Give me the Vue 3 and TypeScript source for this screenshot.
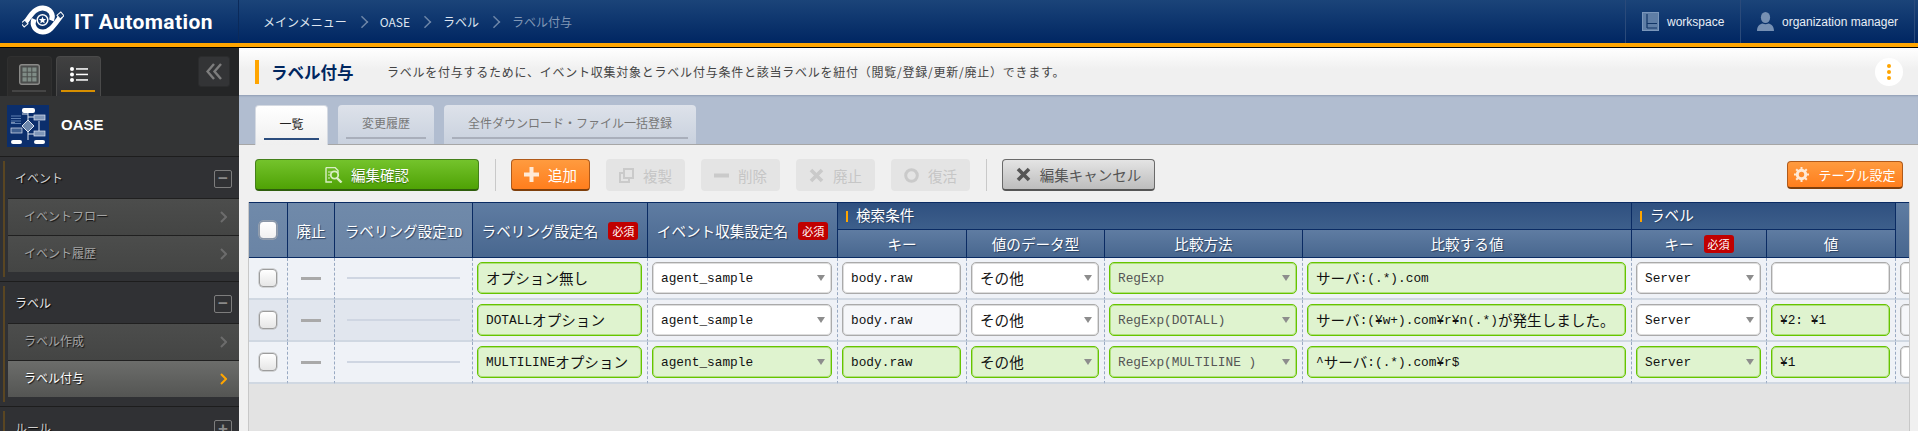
<template>
  <div class="page">
    <header class="top">
      <div class="brand">
        <svg class="logo" viewBox="0 0 42 30" fill="none" stroke="#fff">
          <path d="M3 18C9 10 13 2.500 21 3C28 3.500 32 9 29.500 15.500" stroke-width="5" />
          <path d="M39 11C33 19 28 27.500 20.500 27C13 26.500 9.500 20.500 12 14" stroke-width="5" />
          <circle cx="20.500" cy="15" r="5.300" stroke-width="1.500" />
          <path d="M20.500 11.500l1 2.500 2.700.1-2.100 1.700.7 2.600-2.300-1.500-2.300 1.500.7-2.600-2.100-1.700 2.700-.1z" fill="#fff" stroke="none" />
          <rect x="0" y="16" width="5" height="5" fill="#1c3f70" stroke-width="1" transform="rotate(-40 2.500 18.500)" />
          <rect x="36" y="8" width="5" height="5" fill="#1c3f70" stroke-width="1" transform="rotate(-40 38.500 10.500)" />
        </svg>
        <span class="brand-name">IT Automation</span>
      </div>
      <nav class="crumbs">
        <template v-for="(c, i) in crumbs" :key="c">
          <span v-if="i > 0" class="crumb-arrow"></span>
          <span :class="{ 'crumb-last': i === crumbs.length - 1 }">{{ c }}</span>
        </template>
      </nav>
      <div class="top-right">
        <div class="top-item workspace">
          <svg width="17" height="19" viewBox="0 0 17 19">
            <rect x=".5" y=".5" width="16" height="18" fill="#5f7ea6" stroke="#7b97bb" />
            <path d="M5 2v14M5 11.500h10M5 16h10" stroke="#123566" stroke-width="1.200" fill="none" />
          </svg>
          <span>workspace</span>
        </div>
        <div class="top-item user">
          <svg width="17" height="19" viewBox="0 0 17 19" fill="#7690b3">
            <ellipse cx="8.500" cy="5.500" rx="4.600" ry="5.500" />
            <path d="M0 19c0-5 3-7 5.500-7.500 2 1 4 1 6 0C14 12 17 14 17 19z" />
          </svg>
          <span>organization manager</span>
        </div>
      </div>
    </header>

    <div class="body">
      <aside class="side">
        <div class="side-tabs">
          <div class="side-tab">
            <svg width="21" height="21" viewBox="0 0 21 21">
              <rect x=".7" y=".7" width="19.600" height="19.600" rx="2" fill="#4b4d4c" stroke="#8a8a88" stroke-width="1.400" />
              <path d="M3.500 3.500h14v14h-14z" fill="#7f8c86" />
              <path d="M8.200 3v15M12.800 3v15M3 8.200h15M3 12.800h15" stroke="#4b4d4c" />
            </svg>
          </div>
          <div class="side-tab side-tab-on">
            <svg width="18" height="15" viewBox="0 0 18 15" fill="#fff">
              <circle cx="2" cy="2" r="2" />
              <circle cx="2" cy="7.500" r="2" />
              <circle cx="2" cy="13" r="2" />
              <rect x="6" y="1.200" width="12" height="1.500" />
              <rect x="6" y="6.700" width="12" height="1.500" />
              <rect x="6" y="12.200" width="12" height="1.500" />
            </svg>
          </div>
          <button class="collapse">
            <svg width="16" height="17" viewBox="0 0 16 17" fill="none" stroke="#7d7d7d" stroke-width="2.400">
              <path d="M8 1L1.500 8.500 8 16M15 1L8.500 8.500 15 16" />
            </svg>
          </button>
        </div>
        <div class="menu-title">
          <svg class="menu-icon" viewBox="0 0 42 42">
            <rect width="42" height="42" fill="#0b2e6c" />
            <path d="M21 5v30M21 9h-6M21 12h6M21 29h8M4 18h4M32 16v10" stroke="#dfe6f0" fill="none" />
            <rect x="15" y="3" width="13" height="5" rx="2" fill="#fff" />
            <path d="M4 11h10M4 13.500h10M4 16h10M4 18.500h10" stroke="#5f7fb0" />
            <rect x="27" y="10" width="11" height="5" fill="#7f96b8" stroke="#dfe6f0" stroke-width=".7" />
            <path d="M21 15l6 6-6 6-6-6z" fill="#6c86ab" stroke="#dfe6f0" />
            <rect x="4" y="23" width="11" height="5" fill="#3f5f90" stroke="#dfe6f0" stroke-width=".7" />
            <rect x="27" y="26" width="11" height="5" fill="#7f96b8" stroke="#dfe6f0" stroke-width=".7" />
            <rect x="4" y="35" width="11" height="4" rx="2" fill="#fff" />
            <rect x="27" y="35" width="11" height="4" rx="2" fill="#fff" />
          </svg>
          <span class="menu-name">OASE</span>
        </div>
        <section v-for="g in groups" :key="g.title" class="group">
          <div class="group-in">
            <div class="group-head">
              <span class="group-label" :class="{ 'head-on': g.title === 'ラベル' }">{{ g.title }}</span>
              <span class="toggle">{{ g.items.length ? '−' : '+' }}</span>
            </div>
            <div v-for="it in g.items" :key="it" class="item" :class="{ 'item-on': it === 'ラベル付与' }">
              <span class="item-label">{{ it }}</span>
              <svg width="7" height="12" viewBox="0 0 7 12" fill="none" stroke-width="2" class="item-arrow">
                <path d="M1 1l5 5-5 5" />
              </svg>
            </div>
          </div>
        </section>
      </aside>

      <main class="main">
        <div class="title-bar">
          <h1>ラベル付与</h1>
          <p>ラベルを付与するために、イベント収集対象とラベル付与条件と該当ラベルを紐付（閲覧/登録/更新/廃止）できます。</p>
          <div class="dots"><i></i><i></i><i></i></div>
        </div>

        <div class="tabs">
          <div class="tab tab-on">一覧</div>
          <div class="tab tab-history">変更履歴</div>
          <div class="tab tab-bulk">全件ダウンロード・ファイル一括登録</div>
        </div>

        <div class="toolbar">
          <button class="btn btn-green">
            <svg width="18" height="16" viewBox="0 0 18 16" fill="none" stroke="#d9efc5">
              <path d="M1 .5h9l3 3V6M1 .5v14.500h6" stroke-width="1.400" />
              <circle cx="9.500" cy="8" r="3.700" stroke-width="1.800" />
              <path d="M12 11l4.500 4.500" stroke-width="2.400" />
              <path d="M3 5h4M3 8h2M3 11h2" />
            </svg>
            <span>編集確認</span>
          </button>
          <span class="sep"></span>
          <button class="btn btn-orange">
            <svg width="15" height="15" viewBox="0 0 15 15" fill="#ffe9d6"><path d="M5.500 0h4v5.500H15v4H9.500V15h-4V9.500H0v-4h5.500z" /></svg>
            <span>追加</span>
          </button>
          <button class="btn btn-off">
            <svg width="15" height="15" viewBox="0 0 15 15" fill="none" stroke="#cacaca" stroke-width="2"><path d="M5 1h9v9H5zM5 5H1v9h9v-4" /></svg>
            <span>複製</span>
          </button>
          <button class="btn btn-off">
            <svg width="15" height="15" viewBox="0 0 15 15" fill="#cacaca"><rect y="5.500" width="15" height="4" /></svg>
            <span>削除</span>
          </button>
          <button class="btn btn-off">
            <svg width="15" height="15" viewBox="0 0 15 15" fill="none" stroke="#cacaca" stroke-width="3.600"><path d="M2 2l11 11M13 2L2 13" /></svg>
            <span>廃止</span>
          </button>
          <button class="btn btn-off">
            <svg width="15" height="15" viewBox="0 0 15 15" fill="none" stroke="#cacaca" stroke-width="3"><circle cx="7.500" cy="7.500" r="5.800" /></svg>
            <span>復活</span>
          </button>
          <span class="sep"></span>
          <button class="btn btn-gray">
            <svg width="15" height="15" viewBox="0 0 15 15" fill="none" stroke="#555" stroke-width="3.600"><path d="M2 2l11 11M13 2L2 13" /></svg>
            <span>編集キャンセル</span>
          </button>
          <button class="btn btn-orange btn-setting">
            <svg width="15" height="15" viewBox="0 0 15 15">
              <circle cx="7.500" cy="7.500" r="4.200" fill="none" stroke="#ffe9d6" stroke-width="3" />
              <path d="M7.500 0v15M0 7.500h15M2.200 2.200l10.600 10.600M12.800 2.200L2.200 12.800" stroke="#ffe9d6" stroke-width="2" stroke-dasharray="2.500 10" />
            </svg>
            <span>テーブル設定</span>
          </button>
        </div>

        <div class="table-area">
          <div class="table-wrap">
            <table>
              <colgroup>
                <col v-for="w in colWidths" :key="w.id" :class="w.id" />
              </colgroup>
              <thead>
                <tr>
                  <th rowspan="2" class="th-light"><span class="check check-head"></span></th>
                  <th rowspan="2" class="th-light">廃止</th>
                  <th rowspan="2" class="th-light">ラベリング設定<span class="lat">ID</span></th>
                  <th rowspan="2">ラベリング設定名<em>必須</em></th>
                  <th rowspan="2">イベント収集設定名<em>必須</em></th>
                  <th colspan="4" class="th-group"><span class="mark"></span>検索条件</th>
                  <th colspan="2" class="th-group"><span class="mark"></span>ラベル</th>
                  <th rowspan="2"></th>
                </tr>
                <tr>
                  <th>キー</th>
                  <th>値のデータ型</th>
                  <th>比較方法</th>
                  <th>比較する値</th>
                  <th>キー<em>必須</em></th>
                  <th>値</th>
                </tr>
              </thead>
              <tbody>
                <tr v-for="(row, r) in rows" :key="r">
                  <td class="td-fix"><span class="check"></span></td>
                  <td class="td-fix"><span class="dash"></span></td>
                  <td class="td-fix"><span class="idline"></span></td>
                  <td v-for="(f, c) in row" :key="c">
                    <div class="field" :class="{ on: f.on, select: f.sel, soft: f.soft, dim: f.dim }">
                      <span v-for="(s, n) in segs(f.v)" :key="n" :class="s.cjk ? 'cjk' : 'lat'">{{ s.t }}</span>
                    </div>
                  </td>
                </tr>
              </tbody>
            </table>
          </div>
        </div>
      </main>
    </div>
  </div>
</template>

<script setup lang="ts">
interface Cell {
  v: string
  on?: boolean
  sel?: boolean
  soft?: boolean
  dim?: boolean
}

const crumbs = ['メインメニュー', 'OASE', 'ラベル', 'ラベル付与']

const groups = [
  { title: 'イベント', items: ['イベントフロー', 'イベント履歴'] },
  { title: 'ラベル', items: ['ラベル作成', 'ラベル付与'] },
  { title: 'ルール', items: [] as string[] },
]

const colWidths = ['c-check', 'c-off', 'c-id', 'c-name', 'c-event', 'c-key', 'c-type', 'c-cmp', 'c-val', 'c-lkey', 'c-lval', 'c-next'].map((id) => ({ id }))

const rows: Cell[][] = [
  [
    { v: 'オプション無し', on: true },
    { v: 'agent_sample', sel: true },
    { v: 'body.raw' },
    { v: 'その他', sel: true },
    { v: 'RegExp', on: true, sel: true, dim: true },
    { v: 'サーバ:(.*).com', on: true },
    { v: 'Server', sel: true },
    { v: '' },
    { v: '' },
  ],
  [
    { v: 'DOTALLオプション', on: true },
    { v: 'agent_sample', sel: true },
    { v: 'body.raw', soft: true },
    { v: 'その他', sel: true },
    { v: 'RegExp(DOTALL)', on: true, sel: true, dim: true },
    { v: 'サーバ:(¥w+).com¥r¥n(.*)が発生しました。', on: true },
    { v: 'Server', sel: true },
    { v: '¥2: ¥1', on: true },
    { v: '', soft: true },
  ],
  [
    { v: 'MULTILINEオプション', on: true },
    { v: 'agent_sample', on: true, sel: true },
    { v: 'body.raw', on: true },
    { v: 'その他', on: true, sel: true },
    { v: 'RegExp(MULTILINE )', on: true, sel: true, dim: true },
    { v: '^サーバ:(.*).com¥r$', on: true },
    { v: 'Server', on: true, sel: true },
    { v: '¥1', on: true },
    { v: '' },
  ],
]

// 全角と半角で字幅が違うのでフォントを分ける
const segs = (text: string) =>
  (text.match(/[\u3000-\u9fff]+|[^\u3000-\u9fff]+/g) ?? []).map((t) => ({
    t,
    cjk: /[\u3000-\u9fff]/.test(t),
  }))
</script>

<style>
html,
body {
  margin: 0;
  overflow: hidden;
  background: #f0f0f0;
}
</style>

<style scoped>
.page {
  width: 1918px;
  height: 431px;
  display: flex;
  flex-direction: column;
  overflow: hidden;
  font-family: "Noto Sans CJK JP", "Liberation Sans", sans-serif;
  font-size: 12px;
}

.top {
  height: 43px;
  flex: none;
  display: flex;
  align-items: center;
  color: #fff;
  background: linear-gradient(#1b4479, #002662);
  border-bottom: 4px solid #ffa500;
  box-shadow: 0 1px 0 #000;
  position: relative;
  z-index: 1;
}

.brand {
  width: 239px;
  height: 100%;
  box-sizing: border-box;
  display: flex;
  align-items: center;
  padding-left: 22px;
  border-right: 1px solid #0b2a5a;
}

.logo {
  width: 42px;
  height: 30px;
  margin-bottom: 4px;
}

.brand-name {
  margin-left: 10px;
  font-family: Roboto, sans-serif;
  font-size: 21px;
  font-weight: 700;
  letter-spacing: 0.4px;
}

.crumbs {
  display: flex;
  align-items: center;
  gap: 12.500px;
  padding-left: 24px;
  color: #dfe6f0;
}

.crumb-arrow {
  width: 5px;
  height: 5px;
  margin-right: 2px;
  border-top: 1.5px solid #6d86a8;
  border-right: 1.5px solid #6d86a8;
  transform: rotate(45deg) scale(1.5);
}

.crumb-last {
  color: #8197b5;
}

.top-right {
  margin-left: auto;
  display: flex;
  height: 100%;
  padding-right: 3px;
  font-family: "Liberation Sans", sans-serif;
  color: #e8eef6;
}

.top-item {
  display: flex;
  align-items: center;
  gap: 8px;
  box-sizing: border-box;
  border-left: 1px solid #2a4a7a;
  padding-left: 16px;
}

.workspace {
  width: 115px;
}

.user {
  width: 175px;
  border-right: 1px solid #2a4a7a;
}

.body {
  flex: 1;
  display: flex;
  min-height: 0;
  border-top: 1px solid #000;
}

.side {
  width: 239px;
  flex: none;
  background: #303134;
  overflow: hidden;
}

.side-tabs {
  height: 48px;
  box-sizing: border-box;
  padding: 8px 9px 0 7px;
  display: flex;
  align-items: flex-start;
  gap: 4px;
  background: #242526;
}

.side-tab {
  width: 45px;
  height: 40px;
  box-sizing: border-box;
  display: flex;
  justify-content: center;
  padding-top: 7px;
  border-radius: 4px 4px 0 0;
  background: #2b2b2b;
  border: 1px solid #303030;
  border-bottom: 0;
  position: relative;
}

.side-tab::after {
  content: "";
  position: absolute;
  left: 4px;
  right: 5px;
  bottom: 4px;
  height: 2px;
  background: #454545;
}

.side-tab-on {
  background: linear-gradient(#414141, #303134);
  border-color: #4a4a4a;
}

.side-tab-on svg {
  margin-top: 3px;
}

.side-tab-on::after {
  background: #d88f00;
}

.collapse {
  margin-left: auto;
  width: 32px;
  height: 31px;
  padding: 0;
  border: 1px solid #2b2c2d;
  border-radius: 3px;
  background: #333436;
  display: flex;
  align-items: center;
  justify-content: center;
}

.menu-title {
  height: 61px;
  box-sizing: border-box;
  display: flex;
  align-items: center;
  gap: 12px;
  padding-left: 7px;
  background: #333435;
  border-bottom: 1px solid #1d1d1d;
  color: #fff;
  font-family: "Liberation Sans", sans-serif;
  font-size: 15px;
  font-weight: 700;
}

.menu-icon {
  width: 42px;
  height: 42px;
}

.menu-name {
  margin-bottom: 4px;
}

.group {
  padding: 4px 0 4px 3px;
  border-bottom: 1px solid #1d1d1d;
}

.group-in {
  height: 116px;
  box-sizing: border-box;
  border-left: 2px solid #5a4622;
}

.group-head {
  height: 36px;
  margin-bottom: 1px;
  display: flex;
  align-items: center;
  justify-content: space-between;
  padding: 0 7px 0 10px;
  color: #cfcfcf;
  text-shadow: 1px 1px 1px #000;
}

.group-label,
.item-label {
  margin-bottom: 3px;
}

.head-on {
  color: #e6e6e6;
}

.toggle {
  width: 18px;
  height: 18px;
  box-sizing: border-box;
  border: 1px solid #7d7d7d;
  border-radius: 2px;
  color: #8a8a8a;
  font-family: "Liberation Sans", sans-serif;
  font-size: 17px;
  font-weight: 700;
  line-height: 15px;
  text-align: center;
  text-shadow: none;
}

.item {
  height: 37px;
  box-sizing: border-box;
  margin-left: 3px;
  display: flex;
  align-items: center;
  justify-content: space-between;
  padding: 0 12px 0 16px;
  border-top: 1px solid #202020;
  background: linear-gradient(#4c4d4c, #444544);
  color: #a5a5a5;
  text-shadow: 1px 1px 1px #111;
}

.item-arrow {
  stroke: #6c6c6c;
}

.item-on {
  background: linear-gradient(#6c6d6b, #545553);
  color: #fff;
}

.item-on .item-arrow {
  stroke: #ffa500;
}

.main {
  flex: 1;
  min-width: 0;
  display: flex;
  flex-direction: column;
}

.title-bar {
  height: 47px;
  flex: none;
  box-sizing: border-box;
  display: flex;
  align-items: center;
  padding: 0 15px 0 16px;
  background: linear-gradient(#fff, #f0f0f0 45%);
}

.title-bar h1 {
  margin: 0;
  width: 132px;
  box-sizing: border-box;
  padding-left: 12px;
  border-left: 4px solid #ffa500;
  color: #00265f;
  font-size: 16.500px;
  font-weight: 700;
  line-height: 24px;
}

.title-bar p {
  margin: 0;
  color: #444;
  font-size: 12px;
  letter-spacing: 0.76px;
}

.dots {
  margin-left: auto;
  width: 28px;
  height: 28px;
  border-radius: 50%;
  background: #fff;
  display: flex;
  flex-direction: column;
  align-items: center;
  justify-content: center;
  gap: 2px;
}

.dots i {
  width: 4px;
  height: 4px;
  border-radius: 50%;
  background: #ffa500;
}

.tabs {
  height: 50px;
  flex: none;
  box-sizing: border-box;
  display: flex;
  align-items: flex-end;
  gap: 10px;
  padding-left: 16px;
  background: #b1bdd0;
  border-bottom: 1px solid #a6a6a6;
  box-shadow: inset 0 2px 2px -1px #8f9db3;
}

.tab {
  height: 39px;
  box-sizing: border-box;
  padding-top: 9px;
  text-align: center;
  color: #777;
  border-radius: 4px 4px 0 0;
  background: linear-gradient(#dde2ea, #c9d1de);
  position: relative;
}

.tab::after {
  content: "";
  position: absolute;
  left: 8px;
  right: 8px;
  bottom: 5px;
  height: 2px;
  background: #a9afbb;
}

.tab-on {
  width: 73px;
  height: 40px;
  margin-bottom: -1px;
  color: #222;
  background: linear-gradient(#fff, #efefef);
  border: 1px solid #d5dae2;
  border-bottom: 0;
}

.tab-on::after {
  background: #2c4d7e;
}

.tab-history {
  width: 96px;
}

.tab-bulk {
  width: 252px;
}

.toolbar {
  height: 57px;
  flex: none;
  box-sizing: border-box;
  display: flex;
  align-items: flex-start;
  gap: 16px;
  padding: 14px 15px 0 16px;
}

.sep {
  width: 1px;
  height: 32px;
  margin-right: -1px;
  background: #c9c9c9;
}

.btn {
  height: 32px;
  width: 79px;
  box-sizing: border-box;
  padding: 0;
  display: flex;
  align-items: center;
  justify-content: center;
  gap: 9px;
  border-radius: 4px;
  border: 1px solid transparent;
  font-family: inherit;
  font-size: 14.500px;
}

.btn-green {
  width: 224px;
  gap: 8px;
  color: #fff;
  background: linear-gradient(#74c32c, #4fa205);
  border-color: #44801a;
  border-bottom: 2px solid #2f5e0d;
  text-shadow: 0 1px 1px #3a6e10;
}

.btn-orange {
  color: #fff;
  background: linear-gradient(#ff9b3f, #ff7e1d);
  border-color: #b05a1a;
  border-bottom: 2px solid #7f3f0c;
}

.btn-off {
  color: #c6c6c6;
  background: #e4e4e4;
}

.btn-gray {
  width: 153px;
  color: #555;
  background: linear-gradient(#e4e4e4, #bdbdbd);
  border-color: #6a6a6a;
  border-bottom: 2px solid #555;
}

.btn-setting {
  width: 116px;
  height: 28px;
  margin-top: 2px;
  margin-left: auto;
  font-size: 13px;
}

.table-area {
  flex: 1;
  min-height: 0;
  padding: 0 8px 0 9px;
}

.table-wrap {
  height: 100%;
  overflow: hidden;
  box-sizing: border-box;
  background: #e3e3e3;
  border-left: 1px solid #c8c8c8;
  border-right: 1px solid #c8c8c8;
}

table {
  table-layout: fixed;
  width: 1677px;
  border-collapse: separate;
  border-spacing: 0;
}

.c-check { width: 39px; }
.c-off { width: 47px; }
.c-id { width: 138px; }
.c-name { width: 175px; }
.c-event { width: 190px; }
.c-key { width: 129px; }
.c-type { width: 138px; }
.c-cmp { width: 198px; }
.c-val { width: 329px; }
.c-lkey { width: 135px; }
.c-lval { width: 129px; }
.c-next { width: 30px; }

th {
  height: 28px;
  padding: 0;
  box-sizing: border-box;
  color: #fff;
  font-size: 14.600px;
  font-weight: 400;
  text-shadow: 1px 1px 1px #2a4060;
  white-space: nowrap;
  background: linear-gradient(#5f7ca2, #48678f);
  border-right: 1px solid #0a2b63;
  border-bottom: 1px solid #0a2b63;
}

thead tr:first-child th {
  border-top: 1px solid #0a2b63;
}

th.th-light {
  background: linear-gradient(#708aaa, #6a84a5);
}

th.th-group {
  text-align: left;
  padding: 0 0 3px 8px;
  background: linear-gradient(#2f5080, #3d5f8b);
}

.mark {
  display: inline-block;
  width: 2px;
  height: 11px;
  margin-right: 8px;
  vertical-align: -1px;
  background: #ffa500;
}

th em {
  display: inline-block;
  width: 30px;
  height: 18px;
  margin-left: 10px;
  border-radius: 3px;
  background: #c00000;
  font-size: 11px;
  font-style: normal;
  line-height: 18px;
  text-align: center;
  text-shadow: none;
  vertical-align: 1px;
}

td {
  height: 42px;
  padding: 4px 5px 3px 4px;
  box-sizing: border-box;
  vertical-align: top;
  background: #eff2f7;
  border-right: 1px dashed #98a9c2;
  border-bottom: 2px solid #d0d8e2;
}

tbody tr:nth-child(2) td {
  background: #eff1f6;
}

tbody tr:nth-child(2) td.td-fix {
  background: #e1e6ee;
}

td.td-fix {
  text-align: center;
  padding: 0;
  vertical-align: middle;
}

.check {
  display: block;
  width: 18px;
  height: 18px;
  margin: 0 auto;
  box-sizing: border-box;
  border: 1px solid #9c9c9c;
  border-radius: 4px;
  background: linear-gradient(#fff, #e6e6e6);
  box-shadow: 0 0 0 0.5px #b5b5b5;
}

.check-head {
  border-color: #8b97a8;
  background: linear-gradient(#fff, #f0f0f0);
}

.dash {
  display: block;
  width: 20px;
  height: 3px;
  margin: 0 auto;
  background: #a9a9a9;
}

.idline {
  display: block;
  width: 113px;
  height: 2px;
  margin: 0 auto;
  background: #cfd6e2;
}

.field {
  height: 32px;
  box-sizing: border-box;
  display: flex;
  align-items: center;
  padding-left: 8px;
  background: #fff;
  border: 1px solid #aaa;
  border-radius: 5px;
  box-shadow: inset 0 0 0 1px rgba(170, 170, 170, 0.4);
  color: #111;
  white-space: nowrap;
  overflow: hidden;
  position: relative;
}

.field.soft {
  background: #f6f7fa;
}

.field.on {
  background: #dff3cf;
  border-color: #66c400;
  box-shadow: inset 0 0 0 1px rgba(102, 196, 0, 0.4);
}

.field.dim {
  color: #555;
}

.field.select::after {
  content: "";
  position: absolute;
  right: 6px;
  top: 12px;
  border-left: 4px solid transparent;
  border-right: 4px solid transparent;
  border-top: 6px solid #8d8d8d;
}

.lat {
  font-family: "Liberation Mono", monospace;
  font-size: 12.800px;
}

.cjk {
  font-size: 14.600px;
  margin-bottom: 1px;
}
</style>
